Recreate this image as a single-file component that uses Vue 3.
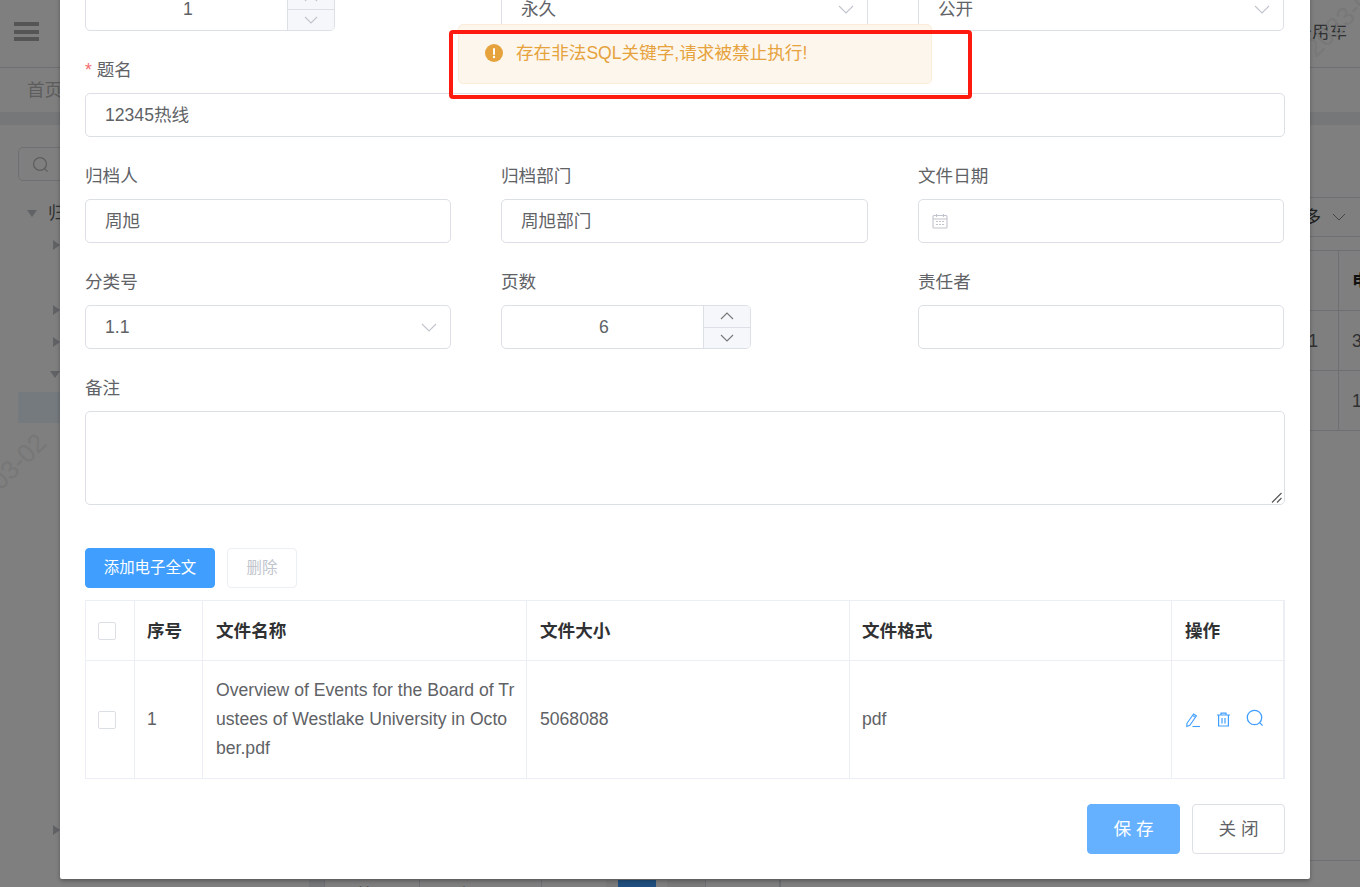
<script setup>
const treeRows = [
  { label: '归', kind: 'down', level: 0 },
  { label: '', kind: 'right', level: 1 },
  { label: '', kind: '', level: 1 },
  { label: '', kind: 'right', level: 1 },
  { label: '', kind: 'right', level: 1 },
  { label: '', kind: 'down', level: 1 },
  { label: '', kind: '', level: 2, active: true },
]
const pageCells = [
  { text: '', w: 15, cls: 'shade' },
  { text: '首页', w: 95, cls: 'line' },
  { text: '上一页', w: 123, cls: 'line end' },
  { text: '', w: 64, cls: '' },
  { text: '', w: 12, cls: 'shade-soft' },
  { text: '1', w: 38, cls: 'blue' },
  { text: '', w: 11, cls: '' },
  { text: '', w: 38, cls: 'shade-soft' },
  { text: '下一页', w: 75, cls: 'line end' },
  { text: '', w: 57, cls: 'line' },
  { text: '尾页', w: 60, cls: '' },
]
</script>

<template>
  <div class="screen">
    <div class="page">
      <header class="topbar">
        <div class="burger"><i></i><i></i><i></i></div>
        <span class="user">公务用车</span>
      </header>
      <nav class="tags"><span>首页</span></nav>
      <div class="band"></div>
      <main class="body">
        <aside class="aside">
          <div class="search">
            <svg width="17" height="17" viewBox="0 0 17 17" fill="none" stroke="#bbb" stroke-width="1.3"><circle cx="8" cy="8" r="6.4"/><path d="M12.6 12.6l3 3"/></svg>
          </div>
          <div class="tree">
            <div v-for="(row, i) in treeRows" :key="i" class="tree-row" :class="['lv' + row.level, { active: row.active }]">
              <i v-if="row.kind" :class="'arrow-' + row.kind"></i>
              <span>{{ row.label }}</span>
            </div>
            <div class="tree-row lv1 last"><i class="arrow-right"></i></div>
          </div>
        </aside>
        <section class="content">
          <div class="toolbar"><span>多</span>
            <svg width="14" height="8" viewBox="0 0 14 8" fill="none" stroke="#888" stroke-width="1"><path d="M1 1l6 6 6-6"/></svg>
          </div>
          <div class="bg-table">
            <div class="bg-row"><div class="c1"></div><div class="c2 strong">电</div></div>
            <div class="bg-row"><div class="c1">1</div><div class="c2">3</div></div>
            <div class="bg-row"><div class="c1"></div><div class="c2">1</div></div>
          </div>
          <div class="spacer"></div>
          <div class="pager">
            <span v-for="(c, i) in pageCells" :key="i" class="cell" :class="c.cls" :style="{ width: c.w + 'px' }">{{ c.text }}</span>
          </div>
        </section>
      </main>
      <span class="mark mark-a">2023-03-02</span>
      <span class="mark mark-b">2023-03-02</span>
    </div>

    <div class="mask">
      <div class="dialog">
        <div class="grid3">
          <div class="stepper">
            <div class="step-val">1</div>
            <div class="step-btns">
              <span><svg class="chev" width="14" height="8" viewBox="0 0 14 8"><path d="M1 7l6-6 6 6"/></svg></span>
              <span><svg class="chev" width="14" height="8" viewBox="0 0 14 8"><path d="M1 1l6 6 6-6"/></svg></span>
            </div>
          </div>
          <div class="field select">永久
            <svg class="chev" width="16" height="9" viewBox="0 0 16 9"><path d="M1 1l7 7 7-7"/></svg>
          </div>
          <div class="field select">公开
            <svg class="chev" width="16" height="9" viewBox="0 0 16 9"><path d="M1 1l7 7 7-7"/></svg>
          </div>
        </div>

        <div class="item">
          <label class="label"><em>*</em> 题名</label>
          <div class="field">12345热线</div>
        </div>

        <div class="grid3">
          <div class="item">
            <label class="label">归档人</label>
            <div class="field">周旭</div>
          </div>
          <div class="item">
            <label class="label">归档部门</label>
            <div class="field">周旭部门</div>
          </div>
          <div class="item">
            <label class="label">文件日期</label>
            <div class="field date">
              <svg width="16" height="16" viewBox="0 0 16 16" fill="none" stroke="#c0c4cc" stroke-width="1.1">
                <rect x="1" y="2.5" width="14" height="12.5" rx="1"/>
                <path d="M1 6h14M4.5 1v3M11.5 1v3"/>
                <path d="M4 8.5h2M7 8.5h2M10 8.5h2M4 11.5h2M7 11.5h2M10 11.5h2"/>
              </svg>
            </div>
          </div>
        </div>

        <div class="grid3">
          <div class="item">
            <label class="label">分类号</label>
            <div class="field select">1.1
              <svg class="chev" width="16" height="9" viewBox="0 0 16 9"><path d="M1 1l7 7 7-7"/></svg>
            </div>
          </div>
          <div class="item">
            <label class="label">页数</label>
            <div class="stepper">
              <div class="step-val">6</div>
              <div class="step-btns">
                <span><svg class="chev dark" width="14" height="8" viewBox="0 0 14 8"><path d="M1 7l6-6 6 6"/></svg></span>
                <span><svg class="chev dark" width="14" height="8" viewBox="0 0 14 8"><path d="M1 1l6 6 6-6"/></svg></span>
              </div>
            </div>
          </div>
          <div class="item">
            <label class="label">责任者</label>
            <div class="field"></div>
          </div>
        </div>

        <div class="item">
          <label class="label">备注</label>
          <div class="area-wrap">
            <textarea class="area"></textarea>
            <svg class="grip" width="11" height="11" viewBox="0 0 11 11" fill="none" stroke="#555" stroke-width="1.1"><path d="M1 10.5L10.5 1M6 10.5L10.5 6"/></svg>
          </div>
        </div>

        <div class="actions">
          <button class="btn primary">添加电子全文</button>
          <button class="btn disabled">删除</button>
        </div>

        <table class="files">
          <colgroup>
            <col class="w1" /><col class="w2" /><col class="w3" /><col class="w4" /><col class="w5" /><col />
          </colgroup>
          <thead>
            <tr>
              <th><span class="check"></span></th>
              <th>序号</th>
              <th>文件名称</th>
              <th>文件大小</th>
              <th>文件格式</th>
              <th>操作</th>
            </tr>
          </thead>
          <tbody>
            <tr>
              <td><span class="check"></span></td>
              <td>1</td>
              <td class="name">Overview of Events for the Board of Trustees of Westlake University in October.pdf</td>
              <td>5068088</td>
              <td>pdf</td>
              <td>
                <div class="ops">
                  <svg width="16" height="16" viewBox="0 0 16 16" fill="none" stroke="#409eff" stroke-width="1.1">
                    <path d="M2 11.2L8.6 2l2.8 2-6.6 9.2-3 1.3z"/><path d="M7.6 3.4l2.8 2"/><path d="M7.5 14.5h7.5"/>
                  </svg>
                  <svg width="15" height="15" viewBox="0 0 15 15" fill="none" stroke="#409eff" stroke-width="1.2">
                    <path d="M1 3h13M5 3V1.2h5V3M2.6 3v11h9.8V3M6 6v5.5M9 6v5.5"/>
                  </svg>
                  <svg class="lift" width="18" height="18" viewBox="0 0 18 18" fill="none" stroke="#409eff" stroke-width="1.3">
                    <circle cx="8.5" cy="8.5" r="7.2"/><path d="M13.6 13.6l3 3"/>
                  </svg>
                </div>
              </td>
            </tr>
          </tbody>
        </table>

        <div class="footer">
          <button class="btn big save">保 存</button>
          <button class="btn big plain">关 闭</button>
        </div>
      </div>

      <div class="message">
        <svg width="18" height="18" viewBox="0 0 18 18"><circle cx="9" cy="9" r="9" fill="#e6a23c"/><rect x="8" y="4" width="2" height="7" rx="1" fill="#fff"/><circle cx="9" cy="13" r="1.2" fill="#fff"/></svg>
        <span>存在非法SQL关键字,请求被禁止执行!</span>
      </div>
      <div class="callout"></div>
    </div>
  </div>
</template>

<style>
html, body { margin: 0; padding: 0; overflow: hidden; }
</style>

<style scoped>
.screen {
  position: relative;
  width: 1360px;
  height: 887px;
  overflow: hidden;
  font-family: "Liberation Sans", "Noto Sans CJK SC", sans-serif;
  font-size: 17.6px;
  line-height: 20px;
  color: #606266;
  background: #fff;
}
.page { height: 887px; display: flex; flex-direction: column; overflow: hidden; }
.topbar {
  height: 68px;
  box-sizing: border-box;
  flex: none;
  border-bottom: 1px solid #d8dce5;
  display: flex;
  align-items: center;
  justify-content: space-between;
  padding: 0 13px 4px 14px;
}
.burger { width: 25px; display: flex; flex-direction: column; gap: 3.5px; }
.burger i { height: 4px; background: #aaa; }
.user { color: #606266; }
.tags { height: 44px; flex: none; display: flex; align-items: center; padding-left: 27px; color: #bbb; }
.band { height: 13px; flex: none; background: #eceef2; }
.body { flex: 1; display: flex; min-height: 0; }
.aside { width: 309px; flex: none; padding: 22px 0 0 18px; box-sizing: border-box; }
.search {
  width: 200px; height: 34px; box-sizing: border-box; border: 1px solid #dcdfe6; border-radius: 5px;
  display: flex; align-items: center; padding-left: 13px;
}
.tree { margin-top: 16px; margin-left: -18px; }
.tree-row { height: 32.3px; display: flex; align-items: center; position: relative; }
.tree-row.lv0 { padding-left: 27px; gap: 11px; }
.tree-row.lv1 { padding-left: 53px; }
.tree-row.lv1 .arrow-down { margin-left: -3px; }
.tree-row.lv2 { margin-left: 18px; }
.tree-row.active { background: #eaf4ff; height: 31px; margin-top: 1px; }
.tree-row.last { margin-top: 391px; }
.arrow-down { width: 0; height: 0; border-left: 5px solid transparent; border-right: 5px solid transparent; border-top: 7px solid #c0c4cc; }
.arrow-right { width: 0; height: 0; border-top: 5px solid transparent; border-bottom: 5px solid transparent; border-left: 7px solid #c0c4cc; }
.content { flex: 1; min-width: 0; padding-top: 72px; display: flex; flex-direction: column; }
.toolbar {
  height: 38px; flex: none; border-top: 1px solid #dcdfe6; border-bottom: 1px solid #dcdfe6;
  display: flex; align-items: center; justify-content: flex-end; gap: 11px; padding-right: 14px; color: #444;
}
.bg-table { margin-top: 13px; border-top: 1px solid #dcdfe6; }
.bg-row { height: 59px; display: flex; border-bottom: 1px solid #dcdfe6; align-items: stretch; }
.c1 { flex: 1; border-right: 1px solid #dcdfe6; display: flex; align-items: center; justify-content: flex-end; padding-right: 20px; }
.c2 { width: 21px; padding-left: 13px; box-sizing: border-box; display: flex; align-items: center; white-space: nowrap; overflow: hidden; }
.strong { font-weight: 700; color: #222; }
.spacer { flex: 1; border-bottom: 1px solid #dcdfe6; margin-bottom: 19px; }
.pager { height: 7px; flex: none; display: flex; overflow: hidden; }
.cell { flex: none; box-sizing: border-box; height: 40px; line-height: 22px; padding-top: 4px; text-align: center; font-size: 16px; color: #606266; background: #fff; }
.cell.line { border-left: 1px solid #dcdfe6; }
.cell.end { border-right: 1px solid #dcdfe6; }
.cell.shade { background: #eceef2; }
.cell.shade-soft { background: #f4f4f5; }
.cell.blue { background: #409eff; color: transparent; }
.mark { position: absolute; color: #eee; font-size: 26px; line-height: 30px; transform: rotate(-45deg); white-space: nowrap; }
.mark-a { left: -72px; top: 470px; }
.mark-b { left: 1290px; top: -10px; color: #f0f0f0; }

.mask { position: absolute; inset: 0; background: rgba(0, 0, 0, 0.5); }
.dialog {
  position: absolute;
  left: 60px;
  bottom: 8px;
  width: 1250px;
  box-sizing: border-box;
  padding: 0 25px 25px;
  background: #fff;
  border-radius: 2px;
  box-shadow: 0 2px 4px rgba(0, 0, 0, 0.3);
}
.grid3 { display: grid; grid-template-columns: 366px 367px 366px; column-gap: 50px; }
.item { margin-top: 27px; }
.label { display: block; height: 24px; line-height: 24px; margin-bottom: 11px; }
.label em { color: #f56c6c; font-style: normal; }
.field {
  height: 44px; box-sizing: border-box; border: 1px solid #dcdfe6; border-radius: 5px;
  padding: 0 13px 0 19px; display: flex; align-items: center; justify-content: space-between; background: #fff;
}
.date { padding-left: 13px; }
.chev { fill: none; stroke: #c0c4cc; stroke-width: 1.1; }
.chev.dark { stroke: #777; }
.stepper {
  width: 250px; height: 44px; box-sizing: border-box; border: 1px solid #dcdfe6; border-radius: 5px;
  display: flex; overflow: hidden;
}
.step-val { flex: 1; display: flex; align-items: center; justify-content: center; padding-left: 3px; }
.step-btns { width: 46px; border-left: 1px solid #dcdfe6; background: #f5f7fa; display: flex; flex-direction: column; }
.step-btns span { flex: 1; display: flex; align-items: center; justify-content: center; }
.step-btns span + span { border-top: 1px solid #dcdfe6; }
.area-wrap { position: relative; }
.area {
  display: block; width: 100%; height: 94px; box-sizing: border-box; border: 1px solid #dcdfe6; border-radius: 5px;
  outline: none; margin: 0; padding: 0; background: #fff; resize: none;
}
.grip { position: absolute; right: 3px; bottom: 2px; }
.actions { display: flex; gap: 12px; margin-top: 43px; margin-bottom: 12px; }
.btn { font-family: inherit; line-height: 20px; margin: 0; cursor: pointer; border-radius: 4px; box-sizing: border-box; padding: 0; }
.primary { width: 130px; height: 40px; font-size: 15.4px; background: #409eff; border: 1px solid #409eff; color: #fff; }
.disabled { width: 70px; height: 40px; font-size: 15.4px; background: #fff; border: 1px solid #ebeef5; color: #c0c4cc; }
.files {
  width: 1200px; table-layout: fixed; border-collapse: separate; border-spacing: 0;
  border-top: 1px solid #ebeef5; border-left: 1px solid #ebeef5; border-right: 1px solid #ebeef5;
  font-size: 17.6px;
}
.w1 { width: 49px; } .w2 { width: 68px; } .w3 { width: 324px; } .w4 { width: 323px; } .w5 { width: 322px; }
.files th, .files td {
  border-right: 1px solid #ebeef5; border-bottom: 1px solid #ebeef5;
  padding: 0 12px; text-align: left; box-sizing: border-box;
}
.files th:nth-child(3), .files td:nth-child(3),
.files th:nth-child(4), .files td:nth-child(4),
.files th:nth-child(6), .files td:nth-child(6) { padding-left: 13px; padding-right: 11px; }
.files th { height: 60px; line-height: 20px; color: #303133; font-weight: 700; }
.files td { height: 118px; line-height: 29px; color: #606266; }
.name { word-break: break-all; }
.check { display: block; width: 18px; height: 18px; box-sizing: border-box; border: 1px solid #dcdfe6; border-radius: 2px; background: #fff; }
.ops { display: flex; align-items: center; gap: 15px; }
.lift { margin-top: -3px; }
.footer { display: flex; justify-content: flex-end; gap: 12px; margin-top: 25px; }
.big { width: 93px; height: 50px; font-size: 17.6px; }
.save { background: #66b1ff; border: 1px solid #66b1ff; color: #fff; }
.plain { background: #fff; border: 1px solid #dcdfe6; color: #606266; }

.message {
  position: absolute; left: 458px; top: 24px; width: 474px; height: 60px; box-sizing: border-box;
  background: #fdf6ec; border: 1px solid #faecd8; border-radius: 5px;
  display: flex; align-items: center; gap: 13px; padding: 0 0 2px 26px; color: #e6a23c; font-size: 17.6px;
}
.callout {
  position: absolute; left: 449px; top: 30px; width: 523px; height: 69px; box-sizing: border-box;
  border: 4px solid #ff1a10; border-radius: 4px;
}
</style>
